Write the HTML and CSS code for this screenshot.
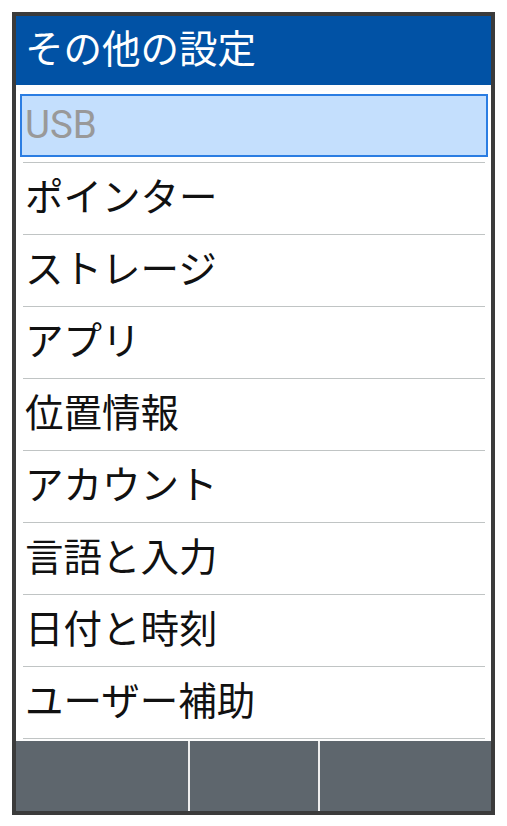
FILE: index.html
```html
<!DOCTYPE html>
<html lang="ja">
<head>
<meta charset="utf-8">
<title>その他の設定</title>
<link rel="stylesheet" href="styles.css">
</head>
<body>
<div class="phone">
  <header class="title-bar">その他の設定</header>
  <ul class="menu">
    <li class="item focused"><span class="label">USB</span><span class="rule"></span></li>
    <li class="item"><span class="label">ポインター</span><span class="rule"></span></li>
    <li class="item"><span class="label">ストレージ</span><span class="rule"></span></li>
    <li class="item"><span class="label">アプリ</span><span class="rule"></span></li>
    <li class="item"><span class="label">位置情報</span><span class="rule"></span></li>
    <li class="item"><span class="label">アカウント</span><span class="rule"></span></li>
    <li class="item"><span class="label">言語と入力</span><span class="rule"></span></li>
    <li class="item"><span class="label">日付と時刻</span><span class="rule"></span></li>
    <li class="item"><span class="label">ユーザー補助</span><span class="rule"></span></li>
  </ul>
  <footer class="softkeys">
    <div class="key"></div>
    <div class="key"></div>
    <div class="key"></div>
  </footer>
</div>
</body>
</html>
```
FILE: styles.css
```css
html, body {
  margin: 0;
  padding: 0;
  background: #ffffff;
}
body {
  font-family: Roboto, "Noto Sans CJK JP", sans-serif;
}
.phone {
  box-sizing: border-box;
  width: 483px;
  height: 803px;
  margin: 12px 0 0 12px;
  border: 4px solid #3b3b3b;
  display: flex;
  flex-direction: column;
  background: #fdfdfd;
}
.title-bar {
  height: 69px;
  flex: none;
  background: #0152a5;
  color: #ffffff;
  font-size: 38.5px;
  line-height: 1;
  display: flex;
  align-items: center;
  padding-left: 9px;
}
.menu {
  list-style: none;
  margin: 0;
  padding: 6px 0 0 0;
  flex: 1;
}
.item {
  height: 72px;
  display: flex;
  flex-direction: column;
  background: #ffffff;
}
.label {
  flex: 1;
  display: flex;
  align-items: center;
  padding-left: 9px;
  font-size: 38.5px;
  line-height: 1;
  color: #111111;
}
.rule {
  height: 1px;
  flex: none;
  margin: 0 6px 0 7px;
  background: #c0c4c4;
}
.focused .label {
  margin: 3px 3px 5px 4px;
  border: 2px solid #2b7de2;
  background: #c4dffd;
  padding-left: 3px;
  color: #999999;
}
.softkeys {
  flex: none;
  height: 70px;
  display: grid;
  grid-template-columns: 172px 128px 1fr;
  column-gap: 2px;
  background: #eeeeee;
}
.key {
  background: #5e666d;
}
```
